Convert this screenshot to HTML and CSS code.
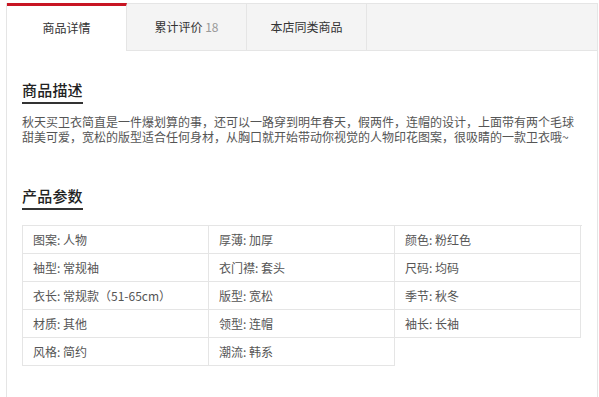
FILE: index.html
```html
<!DOCTYPE html>
<html lang="zh-CN">
<head>
  <meta charset="UTF-8" />
  <title>商品详情</title>
  <link rel="stylesheet" href="styles.css">
</head>
<body>
  <div class="detail">
    <ul class="tabs">
      <li class="tab active">商品详情</li>
      <li class="tab">累计评价 <span class="count">18</span></li>
      <li class="tab">本店同类商品</li>
    </ul>

    <div class="panel">
      <section class="block">
        <h2 class="title">商品描述</h2>
        <p class="desc">秋天买卫衣简直是一件爆划算的事，还可以一路穿到明年春天，假两件，连帽的设计，上面带有两个毛球甜美可爱，宽松的版型适合任何身材，从胸口就开始带动你视觉的人物印花图案，很吸睛的一款卫衣哦~</p>
      </section>

      <section class="block">
        <h2 class="title">产品参数</h2>
        <ul class="params">
          <li>图案: 人物</li>
          <li>厚薄: 加厚</li>
          <li>颜色: 粉红色</li>
          <li>袖型: 常规袖</li>
          <li>衣门襟: 套头</li>
          <li>尺码: 均码</li>
          <li>衣长: 常规款（51-65cm）</li>
          <li>版型: 宽松</li>
          <li>季节: 秋冬</li>
          <li>材质: 其他</li>
          <li>领型: 连帽</li>
          <li>袖长: 长袖</li>
          <li>风格: 简约</li>
          <li>潮流: 韩系</li>
        </ul>
      </section>
    </div>
  </div>
</body>
</html>
```

FILE: styles.css
```css
html, body {
  height: 100%;
}
body {
  margin: 3px 1px 0 6px;
  font-family: "Noto Sans CJK SC", "Liberation Sans", sans-serif;
  color: #333;
  background: #fff;
  overflow: hidden;
}
.detail {
  min-height: 100%;
  border-left: 1px solid #e5e5e5;
  border-right: 1px solid #e5e5e5;
}
.tabs {
  display: flex;
  margin: 0;
  padding: 0;
  list-style: none;
  background: #f4f4f4;
  border-top: 1px solid #e5e5e5;
  border-bottom: 1px solid #e5e5e5;
  height: 46px;
}
.tab {
  width: 119px;
  border-right: 1px solid #e5e5e5;
  font-size: 12px;
  line-height: 46px;
  text-align: center;
  color: #333;
}
.tab.active {
  background: #fff;
  border-top: 3px solid #c81623;
  margin-top: -1px;
  line-height: 44px;
  height: 45px;
  margin-bottom: -1px;
}
.count {
  color: #999;
}
.panel {
  padding: 26px 15px 0;
}
.block {
  margin-bottom: 39px;
}
.title {
  display: inline-block;
  margin: 0 0 10px;
  padding-bottom: 2px;
  font-size: 15px;
  font-weight: 500;
  line-height: 20px;
  letter-spacing: 0.2px;
  color: #222;
  border-bottom: 2px solid #333;
}
.desc {
  margin: 0;
  font-size: 12px;
  line-height: 15px;
  color: #555;
}
.params {
  display: grid;
  grid-template-columns: repeat(3, 186px);
  margin: 5px 0 0;
  padding: 0;
  list-style: none;
  border-top: 1px solid #e5e5e5;
  border-left: 1px solid #e5e5e5;
}
.params li {
  height: 27px;
  line-height: 27px;
  padding-left: 10px;
  font-size: 12px;
  color: #555;
  border-right: 1px solid #e5e5e5;
  border-bottom: 1px solid #e5e5e5;
}
```
